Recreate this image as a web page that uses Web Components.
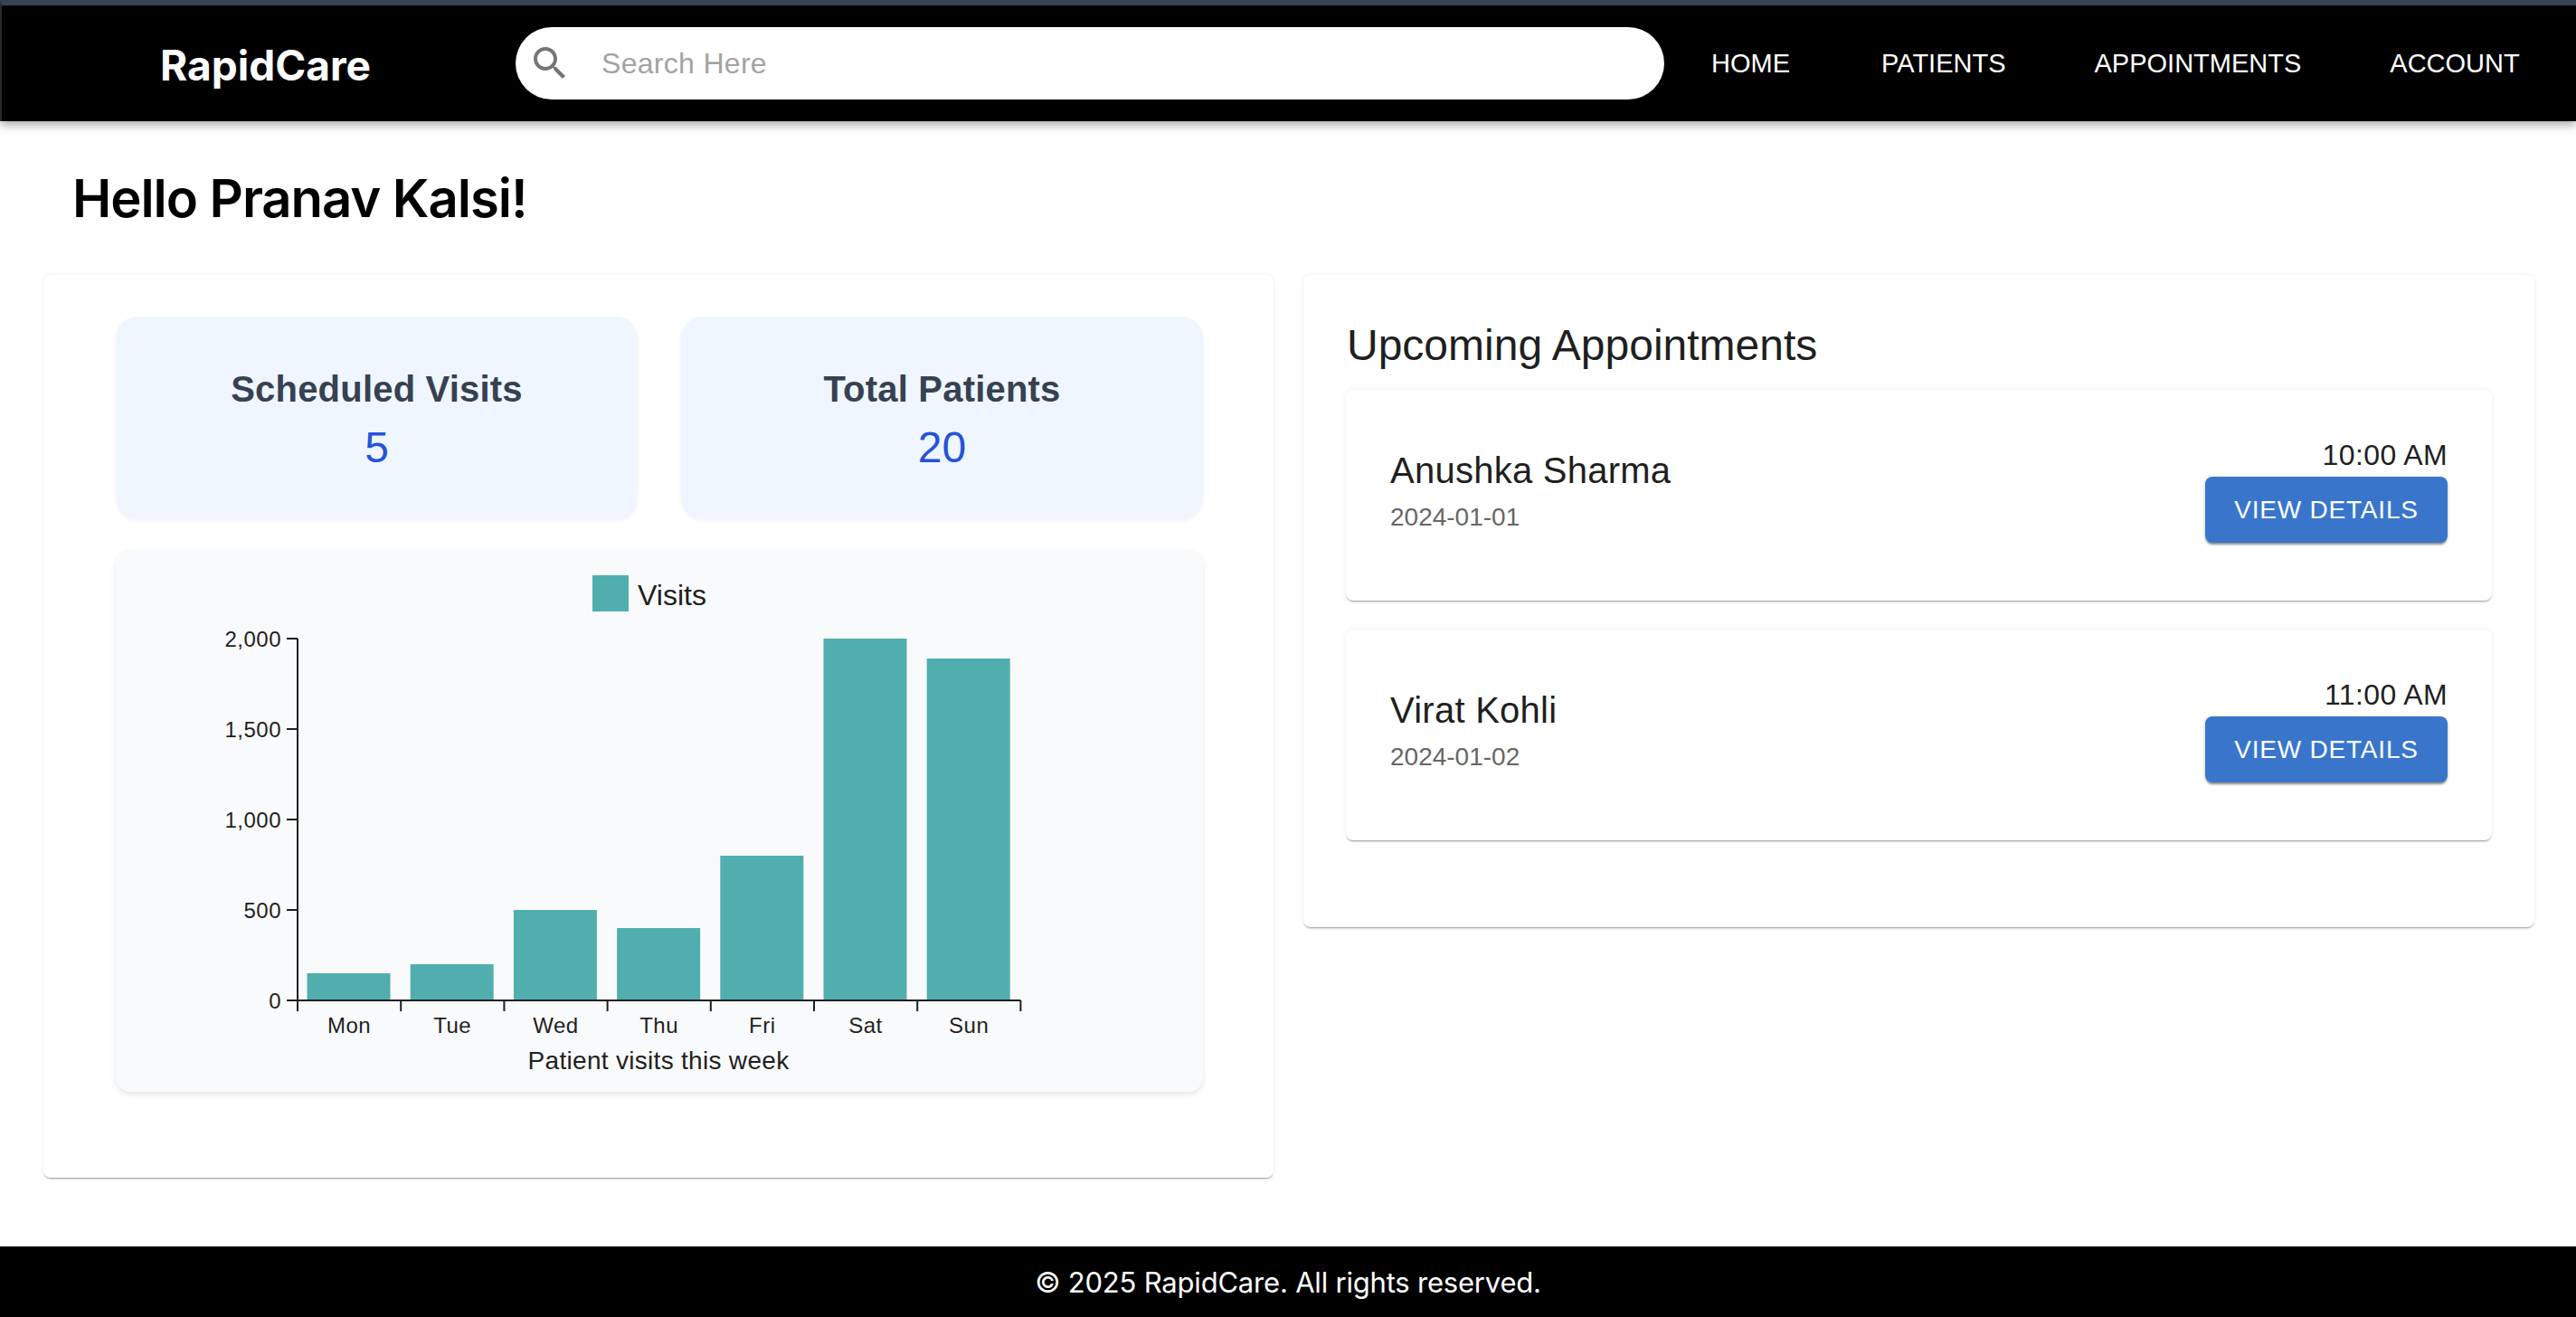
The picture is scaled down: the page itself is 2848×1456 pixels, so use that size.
<!DOCTYPE html>
<html lang="en">
<head>
<meta charset="utf-8">
<title>RapidCare</title>
<style>
  html, body { margin: 0; height: 100%; }
  body {
    display: flex;
    flex-direction: column;
    min-height: 1456px;
    background: #fff;
    font-family: "Liberation Sans", Arial, sans-serif;
    overflow: hidden;
  }
  .columns {
    display: grid;
    grid-template-columns: 1360px 1361px;
    gap: 33px;
    align-items: start;
    padding: 0 0 0 48px;
  }
</style>
</head>
<body>
  <rc-header></rc-header>
  <rc-greeting>Hello Pranav Kalsi!</rc-greeting>
  <div class="columns">
    <rc-panel pad="46px 78px 95px 80px">
      <rc-stats>
        <rc-stat label="Scheduled Visits" value="5"></rc-stat>
        <rc-stat label="Total Patients" value="20"></rc-stat>
      </rc-stats>
      <rc-chart></rc-chart>
    </rc-panel>
    <rc-panel pad="46px 47px 96px 47px">
      <rc-title>Upcoming Appointments</rc-title>
      <rc-appt name="Anushka Sharma" date="2024-01-01" time="10:00 AM"></rc-appt>
      <rc-appt name="Virat Kohli" date="2024-01-02" time="11:00 AM"></rc-appt>
    </rc-panel>
  </div>
  <rc-footer>© 2025 RapidCare. All rights reserved.</rc-footer>

<script>
// Top bar with logo, search and nav links
class RcHeader extends HTMLElement {
  constructor() {
    super();
    this.shadow = this.attachShadow({ mode: "open" });
  }

  connectedCallback() {
    const links = ["HOME", "PATIENTS", "APPOINTMENTS", "ACCOUNT"];
    this.shadow.innerHTML = `
      <style>
        :host {
          display: block;
          flex: none;
          height: 134px;
          box-sizing: border-box;
          background: #000;
          border-top: 6px solid #394254;
          border-left: 2px solid #2a2a2a;
          box-shadow: 0 4px 10px rgba(0, 0, 0, .35);
          position: relative;
          z-index: 1;
        }
        .bar {
          display: flex;
          align-items: flex-start;
          height: 100%;
        }
        .logo {
          width: 568px;
          padding: 39px 0 0 175px;
          box-sizing: border-box;
          font: 700 46px Inter, sans-serif;
          line-height: 54px;
          color: #fff;
        }
        .search {
          display: flex;
          align-items: center;
          width: 1270px;
          height: 80px;
          margin-top: 24px;
          border-radius: 40px;
          background: #fff;
        }
        .search svg {
          width: 48px;
          height: 48px;
          margin-left: 14px;
          fill: #757575;
        }
        .search span {
          margin-left: 33px;
          font: 32px "Liberation Sans", Arial, sans-serif;
          letter-spacing: .3px;
          color: #a3a3a3;
        }
        nav {
          display: flex;
          gap: 98px;
          margin: 47px 0 0 52px;
          font: 29px/34px "Liberation Sans", Arial, sans-serif;
          color: #fff;
        }
        nav span:first-child { margin-right: 3px; }
      </style>
      <div class="bar">
        <div class="logo">RapidCare</div>
        <div class="search">
          <svg viewBox="0 0 24 24"><path d="M15.5 14h-.79l-.28-.27C15.41 12.59 16 11.11 16 9.5 16 5.91 13.09 3 9.5 3S3 5.91 3 9.5 5.91 16 9.5 16c1.61 0 3.09-.59 4.23-1.57l.27.28v.79l5 4.99L20.49 19l-4.99-5zm-6 0C7.01 14 5 11.99 5 9.5S7.01 5 9.5 5 14 7.01 14 9.5 11.99 14 9.5 14z"/></svg>
          <span>Search Here</span>
        </div>
        <nav>${links.map((l) => `<span>${l}</span>`).join("")}</nav>
      </div>
    `;
  }
}

class RcGreeting extends HTMLElement {
  constructor() {
    super();
    this.shadow = this.attachShadow({ mode: "open" });
    this.shadow.innerHTML = `
      <style>
        :host {
          display: block;
          flex: none;
          height: 170px;
          box-sizing: border-box;
          padding: 49px 0 0 80px;
          font: 600 58px/72px Inter, sans-serif;
          letter-spacing: -1.05px;
          color: #000;
        }
      </style>
      <slot></slot>
    `;
  }
}

// White card used for both columns
class RcPanel extends HTMLElement {
  constructor() {
    super();
    this.shadow = this.attachShadow({ mode: "open" });
  }

  connectedCallback() {
    const pad = this.getAttribute("pad") || "0";
    this.shadow.innerHTML = `
      <style>
        :host {
          display: block;
          box-sizing: border-box;
          padding: ${pad};
          background: #fff;
          border-radius: 8px;
          box-shadow: 0 2px 2px -1px rgba(0,0,0,.4), 0 0 6px rgba(0,0,0,.07);
        }
      </style>
      <slot></slot>
    `;
  }
}

class RcStats extends HTMLElement {
  constructor() {
    super();
    this.shadow = this.attachShadow({ mode: "open" });
    this.shadow.innerHTML = `
      <style>
        :host {
          display: grid;
          grid-template-columns: 1fr 1fr;
          gap: 48px;
          margin-bottom: 34px;
        }
      </style>
      <slot></slot>
    `;
  }
}

class RcStat extends HTMLElement {
  constructor() {
    super();
    this.shadow = this.attachShadow({ mode: "open" });
  }

  connectedCallback() {
    this.shadow.innerHTML = `
      <style>
        :host {
          display: flex;
          flex-direction: column;
          align-items: center;
          height: 224px;
          box-sizing: border-box;
          padding-top: 56px;
          background: #eff6ff;
          border-radius: 24px;
          box-shadow: 0 2px 4px rgba(0, 0, 0, .05);
        }
        .label {
          font: 700 40px/48px "Liberation Sans", Arial, sans-serif;
          letter-spacing: .2px;
          color: #374151;
        }
        .value {
          margin-top: 13px;
          font: 48px/56px "Liberation Sans", Arial, sans-serif;
          color: #2552d8;
        }
      </style>
      <div class="label">${this.getAttribute("label")}</div>
      <div class="value">${this.getAttribute("value")}</div>
    `;
  }
}

// Bar chart, the axes and bars are drawn from the data below
class RcChart extends HTMLElement {
  constructor() {
    super();
    this.shadow = this.attachShadow({ mode: "open" });
  }

  connectedCallback() {
    const days = [["Mon", 150], ["Tue", 200], ["Wed", 500], ["Thu", 400], ["Fri", 800], ["Sat", 2000], ["Sun", 1890]];
    const x0 = 201;
    const y0 = 498;
    const band = 114.2;
    const ink = "#1f1f1f";

    const bars = days.map(([, v], i) => {
      const h = v * 0.2;
      return `<rect x="${x0 + i * band + 10.5}" y="${y0 - h}" width="92" height="${h}" fill="#50afae"/>`;
    }).join("");
    const xTicks = days.map((d, i) => `<line x1="${x0 + i * band}" y1="${y0}" x2="${x0 + i * band}" y2="${y0 + 12}"/>`).join("")
      + `<line x1="${x0 + 7 * band}" y1="${y0}" x2="${x0 + 7 * band}" y2="${y0 + 12}"/>`;
    const xLabels = days.map(([d], i) => `<text x="${x0 + i * band + 57}" y="${y0 + 36}" text-anchor="middle">${d}</text>`).join("");
    const yTicks = [0, 500, 1000, 1500, 2000].map((v) => {
      const y = y0 - v * 0.2;
      return `<line x1="${x0 - 12}" y1="${y}" x2="${x0}" y2="${y}"/>`
        + `<text x="${x0 - 18}" y="${y + 8.5}" text-anchor="end">${v.toLocaleString("en-US")}</text>`;
    }).join("");

    this.shadow.innerHTML = `
      <style>
        :host {
          display: block;
          height: 599px;
          background: #f9fafb;
          border-radius: 16px;
          box-shadow: 0 3px 6px rgba(0, 0, 0, .1);
        }
        svg {
          display: block;
          font-family: "Liberation Sans", Arial, sans-serif;
        }
        .ticks text { font-size: 24px; letter-spacing: .5px; fill: ${ink}; }
        .lines line, .lines path { stroke: ${ink}; stroke-width: 2; fill: none; }
      </style>
      <svg width="1202" height="599" viewBox="0 0 1202 599">
        <rect x="527" y="28" width="40" height="40" fill="#50afae"/>
        <text x="577" y="61" font-size="32" fill="${ink}">Visits</text>
        ${bars}
        <g class="lines">
          <path d="M${x0} ${y0 - 400}V${y0}H${x0 + 7 * band}"/>
          ${xTicks}
          ${yTicks.replace(/<text.*?<\/text>/g, "")}
        </g>
        <g class="ticks">
          ${xLabels}
          ${yTicks.replace(/<line.*?\/>/g, "")}
        </g>
        <text x="600" y="574" font-size="28" letter-spacing=".3" text-anchor="middle" fill="${ink}">Patient visits this week</text>
      </svg>
    `;
  }
}

class RcTitle extends HTMLElement {
  constructor() {
    super();
    this.shadow = this.attachShadow({ mode: "open" });
    this.shadow.innerHTML = `
      <style>
        :host {
          display: block;
          margin-bottom: 17px;
          padding-left: 1px;
          font: 48px/64px "Liberation Sans", Arial, sans-serif;
          color: #1f1f1f;
        }
      </style>
      <slot></slot>
    `;
  }
}

// One row in the appointment list
class RcAppt extends HTMLElement {
  constructor() {
    super();
    this.shadow = this.attachShadow({ mode: "open" });
  }

  connectedCallback() {
    this.shadow.innerHTML = `
      <style>
        :host {
          display: flex;
          justify-content: space-between;
          height: 233px;
          box-sizing: border-box;
          padding: 48px 49px 0 49px;
          margin-bottom: 32px;
          background: #fff;
          border-radius: 8px;
          box-shadow: 0 2px 2px -1px rgba(0,0,0,.4), 0 0 6px rgba(0,0,0,.07);
        }
        :host(:last-child) { margin-bottom: 0; }
        .name {
          margin-top: 15px;
          font: 40px/52px "Liberation Sans", Arial, sans-serif;
          letter-spacing: .25px;
          color: #1f1f1f;
        }
        .date {
          margin-top: 6px;
          font: 28px/40px "Liberation Sans", Arial, sans-serif;
          color: #666;
        }
        .right {
          display: flex;
          flex-direction: column;
          align-items: flex-end;
        }
        .time {
          font: 32px/48px "Liberation Sans", Arial, sans-serif;
          letter-spacing: .4px;
          color: #1f1f1f;
        }
        button {
          width: 268px;
          height: 73px;
          margin-top: 0;
          padding: 0;
          border: 0;
          border-radius: 8px;
          background: #3976cb;
          color: #fff;
          font: 28px "Liberation Sans", Arial, sans-serif;
          letter-spacing: .8px;
          box-shadow: 0 3px 2px -1px rgba(0,0,0,.3), 0 2px 3px rgba(0,0,0,.14), 0 1px 5px rgba(0,0,0,.12);
        }
      </style>
      <div>
        <div class="name">${this.getAttribute("name")}</div>
        <div class="date">${this.getAttribute("date")}</div>
      </div>
      <div class="right">
        <div class="time">${this.getAttribute("time")}</div>
        <button>VIEW DETAILS</button>
      </div>
    `;
  }
}

class RcFooter extends HTMLElement {
  constructor() {
    super();
    this.shadow = this.attachShadow({ mode: "open" });
    this.shadow.innerHTML = `
      <style>
        :host {
          display: flex;
          align-items: center;
          justify-content: center;
          height: 78px;
          margin-top: auto;
          background: #000;
          color: #fff;
          font: 400 31px Inter, sans-serif;
          letter-spacing: -.2px;
          flex: none;
        }
      </style>
      <slot></slot>
    `;
  }
}

customElements.define("rc-header", RcHeader);
customElements.define("rc-greeting", RcGreeting);
customElements.define("rc-panel", RcPanel);
customElements.define("rc-stats", RcStats);
customElements.define("rc-stat", RcStat);
customElements.define("rc-chart", RcChart);
customElements.define("rc-title", RcTitle);
customElements.define("rc-appt", RcAppt);
customElements.define("rc-footer", RcFooter);
</script>
</body>
</html>
